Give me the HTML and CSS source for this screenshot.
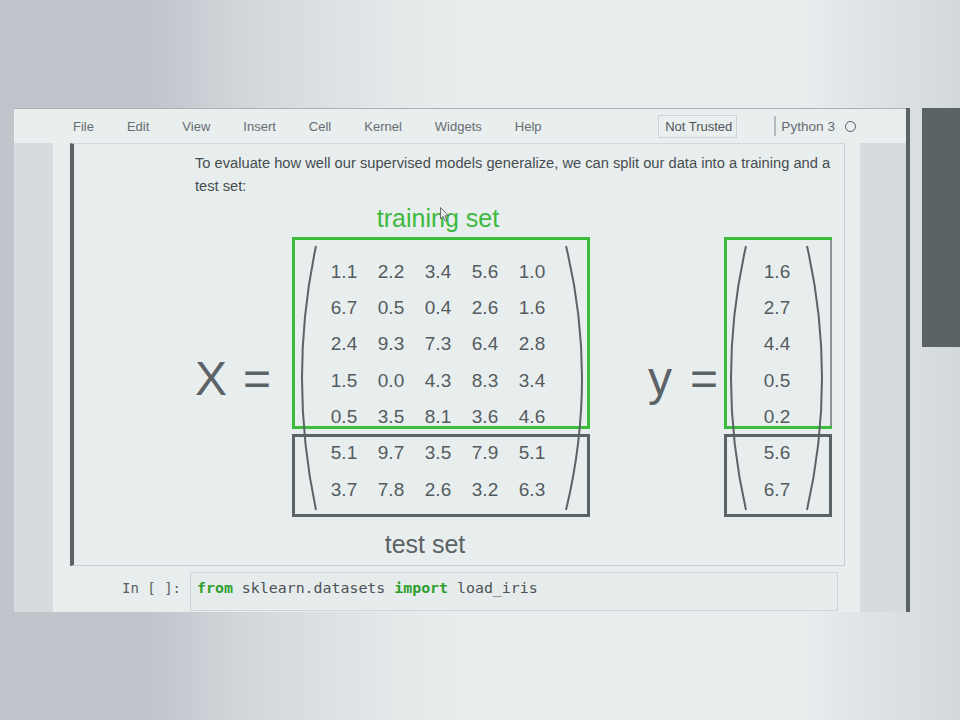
FILE: index.html
```html
<!DOCTYPE html>
<html lang="en">
<head>
<meta charset="utf-8">
<title>Notebook - train/test split</title>
<link rel="stylesheet" href="styles.css">
</head>
<body>
<div class="stage">
  <div class="frame">
    <div class="menubar">
      <nav class="menu">
        <span>File</span><span>Edit</span><span>View</span><span>Insert</span><span>Cell</span><span>Kernel</span><span>Widgets</span><span>Help</span>
      </nav>
      <div class="kernel-area">
        <span class="trust">Not Trusted</span>
        <span class="sep"></span>
        <span class="kernel-name">Python 3</span>
        <span class="kernel-dot"></span>
      </div>
    </div>
    <div class="frame-body">
      <div class="gutter gutter-left"></div>
      <div class="notebook">
        <div class="md-cell">
          <p class="md-text">To evaluate how well our supervised models generalize, we can split our data into a training and a test set:</p>
          <svg class="figure" width="660" height="360" viewBox="180 200 660 360" xmlns="http://www.w3.org/2000/svg">
            <text class="label green" x="438" y="227">training set</text>
            <text class="label grey" x="425" y="553">test set</text>

            <text class="big" x="195" y="395">X</text>
            <text class="big" x="243" y="395">=</text>
            <text class="big" x="648" y="395">y</text>
            <text class="big" x="690" y="395">=</text>

            <rect class="box-test" x="293.5" y="435.5" width="295" height="80"/>
            <rect class="box-train" x="293.5" y="238.5" width="295" height="189"/>
            <path class="paren" d="M316,246 Q288,378 316,510"/>
            <path class="paren" d="M566,246 Q598,378 566,510"/>

            <rect class="box-test" x="725.5" y="435.5" width="105" height="80"/>
            <path class="edge-grey" d="M831,238 V428"/>
            <path class="box-train-open" d="M832,238.5 H725.5 V427.5 H832"/>
            <path class="paren" d="M746,246 Q716,378 746,510"/>
            <path class="paren" d="M807,246 Q837,378 807,510"/>

            <g class="num">
              <text x="344" y="278">1.1</text><text x="391" y="278">2.2</text><text x="438" y="278">3.4</text><text x="485" y="278">5.6</text><text x="532" y="278">1.0</text>
              <text x="344" y="314">6.7</text><text x="391" y="314">0.5</text><text x="438" y="314">0.4</text><text x="485" y="314">2.6</text><text x="532" y="314">1.6</text>
              <text x="344" y="350">2.4</text><text x="391" y="350">9.3</text><text x="438" y="350">7.3</text><text x="485" y="350">6.4</text><text x="532" y="350">2.8</text>
              <text x="344" y="387">1.5</text><text x="391" y="387">0.0</text><text x="438" y="387">4.3</text><text x="485" y="387">8.3</text><text x="532" y="387">3.4</text>
              <text x="344" y="423">0.5</text><text x="391" y="423">3.5</text><text x="438" y="423">8.1</text><text x="485" y="423">3.6</text><text x="532" y="423">4.6</text>
              <text x="344" y="459">5.1</text><text x="391" y="459">9.7</text><text x="438" y="459">3.5</text><text x="485" y="459">7.9</text><text x="532" y="459">5.1</text>
              <text x="344" y="496">3.7</text><text x="391" y="496">7.8</text><text x="438" y="496">2.6</text><text x="485" y="496">3.2</text><text x="532" y="496">6.3</text>

              <text x="777" y="278">1.6</text>
              <text x="777" y="314">2.7</text>
              <text x="777" y="350">4.4</text>
              <text x="777" y="387">0.5</text>
              <text x="777" y="423">0.2</text>
              <text x="777" y="459">5.6</text>
              <text x="777" y="496">6.7</text>
            </g>

            <path class="cursor" d="M440.5,207.5 L440.5,219 L443,216.5 L445,221 L446.8,220.2 L444.9,215.8 L448.3,215.6 Z"/>
          </svg>
        </div>
        <div class="code-cell">
          <div class="prompt">In [ ]:</div>
          <div class="input"><span class="kw">from</span> sklearn.datasets <span class="kw">import</span> load_iris</div>
        </div>
      </div>
      <div class="gutter gutter-right"></div>
    </div>
  </div>
  <div class="scroll-panel"></div>
</div>
</body>
</html>
```

FILE: styles.css
```css
* { box-sizing: border-box; }

html, body {
  margin: 0;
  padding: 0;
}

body {
  width: 960px;
  height: 720px;
  overflow: hidden;
  font-family: "Liberation Sans", Arial, sans-serif;
  background: linear-gradient(to right,
    #bfc5cb 0px, #bfc5cb 150px, #d2d8db 250px, #e4eaea 400px,
    #e8eeee 470px, #e8eeee 800px, #dde2e5 880px, #d3d8db 960px);
}

.stage {
  display: flex;
  align-items: flex-start;
  padding: 108px 0 0 14px;
  height: 720px;
}

.frame {
  width: 896px;
  height: 504px;
  flex-shrink: 0;
  display: flex;
  flex-direction: column;
  border-right: 4px solid #5c6366;
  background: #e8eeee;
}

/* menu bar */
.menubar {
  height: 35px;
  display: flex;
  align-items: center;
  border-top: 1px solid #a9afb3;
  background: #e9eeee;
  padding: 0 50px 0 59px;
  font-size: 13px;
  color: #676d71;
}

.menu {
  display: flex;
  gap: 33px;
}

.kernel-area {
  margin-left: auto;
  display: flex;
  align-items: center;
}

.trust {
  height: 23px;
  line-height: 21px;
  padding: 0 4px 0 6px;
  border: 1px solid #cdd2d5;
  color: #4f5559;
}

.sep {
  width: 2px;
  height: 20px;
  background: #b5bbbf;
  margin: 0 5px 0 37px;
}

.kernel-name {
  font-size: 13.6px;
  color: #676d71;
}

.kernel-dot {
  width: 11px;
  height: 11px;
  margin-left: 10px;
  border-radius: 50%;
  border: 1.5px solid #555b5f;
}

/* body of the notebook */
.frame-body {
  flex: 1;
  display: flex;
}

.gutter {
  flex-shrink: 0;
  background: #d6dbde;
}

.gutter-left { width: 39px; }
.gutter-right { width: 46px; }

.notebook {
  flex: 1;
  min-width: 0;
  padding: 0 15px 0 17px;
  background: #e8eeee;
}

.md-cell {
  border-left: 4px solid #5c6366;
  border-right: 1px solid #c8ced1;
  border-top: 1px solid #d2d7da;
  border-bottom: 1px solid #c8ced1;
  padding: 8px 0 5px 0;
}

.md-text {
  margin: 0 0 0 121px;
  width: 648px;
  font-size: 14.7px;
  line-height: 23px;
  color: #464c50;
}

.figure {
  display: block;
  margin: 2px 0 0 106px;
}

.label {
  font-family: "Liberation Sans", Arial, sans-serif;
  font-size: 25px;
  text-anchor: middle;
}

.green { fill: #3db93d; }
.grey { fill: #5c6366; }

.big {
  font-family: "Liberation Sans", Arial, sans-serif;
  font-size: 48px;
  fill: #5c6366;
}

.num text {
  font-family: "Liberation Sans", Arial, sans-serif;
  font-size: 19px;
  fill: #555b5f;
  text-anchor: middle;
}

.box-train {
  fill: none;
  stroke: #3dbb3d;
  stroke-width: 3;
}

.box-train-open {
  fill: none;
  stroke: #3dbb3d;
  stroke-width: 3;
}

.edge-grey {
  fill: none;
  stroke: #8c9296;
  stroke-width: 2;
}

.box-test {
  fill: none;
  stroke: #5c6366;
  stroke-width: 3;
}

.paren {
  fill: none;
  stroke: #5c6366;
  stroke-width: 2;
}

.cursor {
  fill: #e8eeee;
  stroke: #5c6366;
  stroke-width: 0.9;
}

/* code cell */
.code-cell {
  display: flex;
  margin-top: 6px;
  height: 39px;
}

.prompt {
  width: 120px;
  flex-shrink: 0;
  padding: 6px 9px 0 0;
  text-align: right;
  font-family: "DejaVu Sans Mono", monospace;
  font-size: 14px;
  line-height: 20px;
  color: #5a6064;
}

.input {
  flex: 1;
  min-width: 0;
  margin-right: 7px;
  border: 1px solid #cfd5d8;
  background: #e6ecec;
  padding: 5px 0 0 6px;
  font-family: "DejaVu Sans Mono", monospace;
  font-size: 14.9px;
  line-height: 20px;
  color: #4c5256;
  white-space: pre;
}

.kw {
  color: #2f9e2f;
  font-weight: bold;
}

.scroll-panel {
  width: 38px;
  height: 239px;
  margin-left: 12px;
  background: #5c6366;
}
```
